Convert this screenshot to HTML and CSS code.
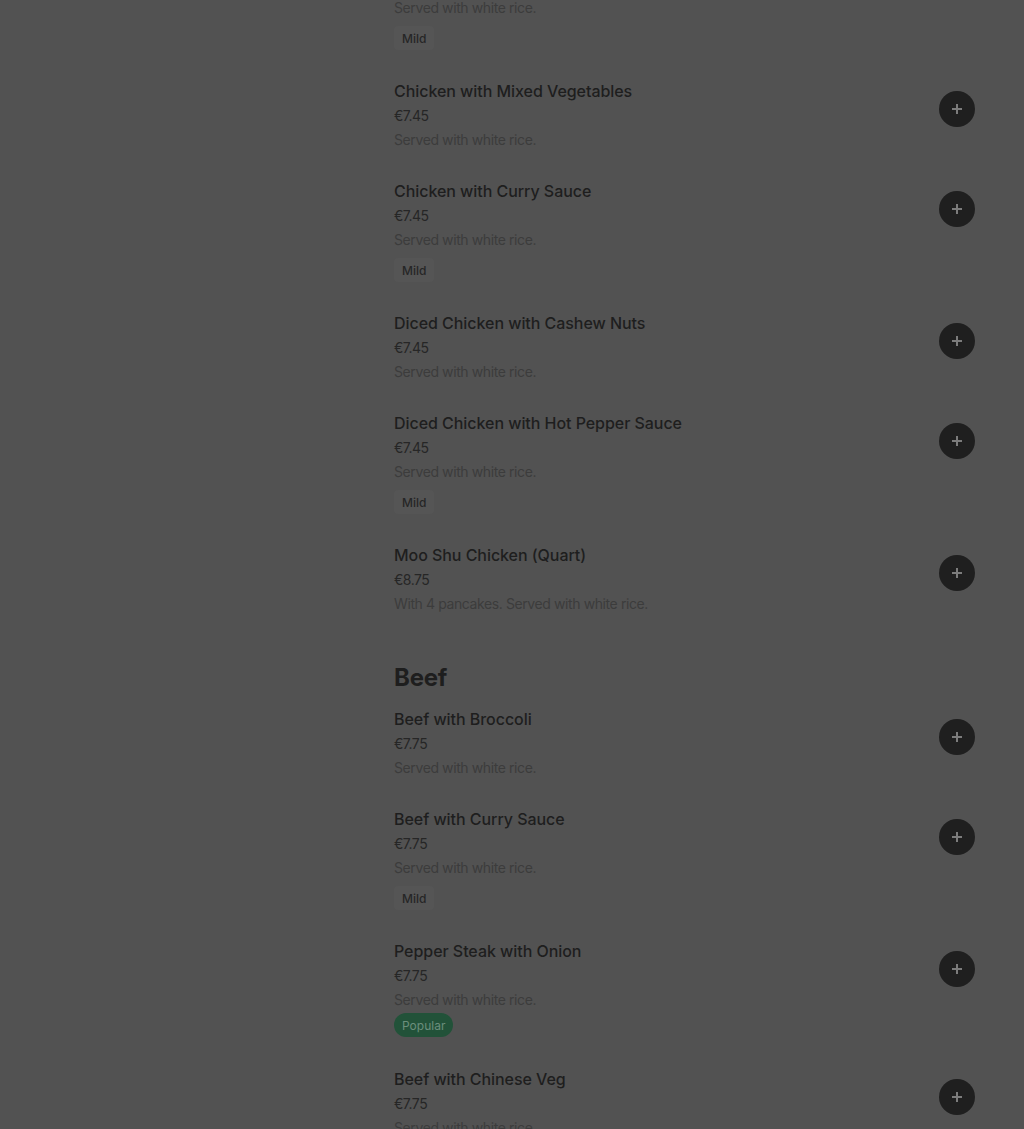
FILE: index.html
```html
<!DOCTYPE html>
<html lang="en">
<head>
<meta charset="utf-8">
<title>Menu</title>
<link rel="stylesheet" href="styles.css">
</head>
<body>
<div class="page">
  <aside class="sidebar"></aside>
  <main class="menu">
    <section class="section">
      <div class="item">
        <div class="info">
          <h3 class="title">Chicken with Broccoli</h3>
          <div class="price">€7.45</div>
          <p class="desc">Served with white rice.</p>
          <span class="tag tag-mild">Mild</span>
        </div>
        <button class="add" aria-label="Add"><svg viewBox="0 0 12 12" width="12" height="12"><path d="M6 1v10M1 6h10" stroke="currentColor" stroke-width="2"/></svg></button>
      </div>
      <div class="item">
        <div class="info">
          <h3 class="title">Chicken with Mixed Vegetables</h3>
          <div class="price">€7.45</div>
          <p class="desc">Served with white rice.</p>
        </div>
        <button class="add" aria-label="Add"><svg viewBox="0 0 12 12" width="12" height="12"><path d="M6 1v10M1 6h10" stroke="currentColor" stroke-width="2"/></svg></button>
      </div>
      <div class="item">
        <div class="info">
          <h3 class="title">Chicken with Curry Sauce</h3>
          <div class="price">€7.45</div>
          <p class="desc">Served with white rice.</p>
          <span class="tag tag-mild">Mild</span>
        </div>
        <button class="add" aria-label="Add"><svg viewBox="0 0 12 12" width="12" height="12"><path d="M6 1v10M1 6h10" stroke="currentColor" stroke-width="2"/></svg></button>
      </div>
      <div class="item">
        <div class="info">
          <h3 class="title">Diced Chicken with Cashew Nuts</h3>
          <div class="price">€7.45</div>
          <p class="desc">Served with white rice.</p>
        </div>
        <button class="add" aria-label="Add"><svg viewBox="0 0 12 12" width="12" height="12"><path d="M6 1v10M1 6h10" stroke="currentColor" stroke-width="2"/></svg></button>
      </div>
      <div class="item">
        <div class="info">
          <h3 class="title">Diced Chicken with Hot Pepper Sauce</h3>
          <div class="price">€7.45</div>
          <p class="desc">Served with white rice.</p>
          <span class="tag tag-mild">Mild</span>
        </div>
        <button class="add" aria-label="Add"><svg viewBox="0 0 12 12" width="12" height="12"><path d="M6 1v10M1 6h10" stroke="currentColor" stroke-width="2"/></svg></button>
      </div>
      <div class="item">
        <div class="info">
          <h3 class="title">Moo Shu Chicken (Quart)</h3>
          <div class="price">€8.75</div>
          <p class="desc">With 4 pancakes. Served with white rice.</p>
        </div>
        <button class="add" aria-label="Add"><svg viewBox="0 0 12 12" width="12" height="12"><path d="M6 1v10M1 6h10" stroke="currentColor" stroke-width="2"/></svg></button>
      </div>
    </section>
    <section class="section">
      <h2 class="section-title">Beef</h2>
      <div class="item">
        <div class="info">
          <h3 class="title">Beef with Broccoli</h3>
          <div class="price">€7.75</div>
          <p class="desc">Served with white rice.</p>
        </div>
        <button class="add" aria-label="Add"><svg viewBox="0 0 12 12" width="12" height="12"><path d="M6 1v10M1 6h10" stroke="currentColor" stroke-width="2"/></svg></button>
      </div>
      <div class="item">
        <div class="info">
          <h3 class="title">Beef with Curry Sauce</h3>
          <div class="price">€7.75</div>
          <p class="desc">Served with white rice.</p>
          <span class="tag tag-mild">Mild</span>
        </div>
        <button class="add" aria-label="Add"><svg viewBox="0 0 12 12" width="12" height="12"><path d="M6 1v10M1 6h10" stroke="currentColor" stroke-width="2"/></svg></button>
      </div>
      <div class="item">
        <div class="info">
          <h3 class="title">Pepper Steak with Onion</h3>
          <div class="price">€7.75</div>
          <p class="desc">Served with white rice.</p>
          <span class="tag tag-popular">Popular</span>
        </div>
        <button class="add" aria-label="Add"><svg viewBox="0 0 12 12" width="12" height="12"><path d="M6 1v10M1 6h10" stroke="currentColor" stroke-width="2"/></svg></button>
      </div>
      <div class="item">
        <div class="info">
          <h3 class="title">Beef with Chinese Veg</h3>
          <div class="price">€7.75</div>
          <p class="desc">Served with white rice.</p>
        </div>
        <button class="add" aria-label="Add"><svg viewBox="0 0 12 12" width="12" height="12"><path d="M6 1v10M1 6h10" stroke="currentColor" stroke-width="2"/></svg></button>
      </div>
    </section>
  </main>
</div>
</body>
</html>
```
FILE: styles.css
```css
html, body {
  margin: 0;
  padding: 0;
  background: #525252;
  height: 1129px;
  overflow: hidden;
}
body {
  font-family: Inter, "Noto Sans", sans-serif;
  color: #1e1e1e;
}
.page {
  display: grid;
  grid-template-columns: 394px 581px;
}
.menu {
  margin-top: -53px;
}
.section-title {
  margin: 19px 0 13px;
  font-size: 24px;
  line-height: 32px;
  font-weight: 700;
  letter-spacing: -0.2px;
  color: #1e1e1e;
}
.item {
  display: flex;
  align-items: flex-start;
  justify-content: space-between;
  padding-bottom: 29px;
}
.info {
  display: flex;
  flex-direction: column;
  align-items: flex-start;
}
.title {
  margin: 0;
  font-size: 16px;
  line-height: 24px;
  font-weight: 500;
  letter-spacing: -0.05px;
  color: #1e1e1e;
}
.price {
  margin-top: 3px;
  font-size: 14px;
  line-height: 20px;
  letter-spacing: -0.5px;
  color: #262626;
}
.desc {
  margin: 4px 0 0;
  font-size: 14px;
  line-height: 20px;
  letter-spacing: -0.4px;
  color: #3c3c3c;
}
.tag {
  display: inline-flex;
  align-items: center;
  height: 24px;
  padding: 0 8px;
  font-size: 12px;
  box-sizing: border-box;
}
.tag-mild {
  margin-top: 8px;
  background: #555555;
  color: #262626;
  border-radius: 4px;
  font-weight: 500;
}
.tag-popular {
  margin: 3px 0 1px;
  background: #225239;
  color: #6b8e7c;
  border-radius: 12px;
  font-weight: 400;
}
.add {
  margin-top: 12px;
  width: 36px;
  height: 36px;
  flex: none;
  border: none;
  border-radius: 50%;
  background: #1f1f1f;
  color: #7c7c7c;
  display: flex;
  align-items: center;
  justify-content: center;
  padding: 0;
}
```
